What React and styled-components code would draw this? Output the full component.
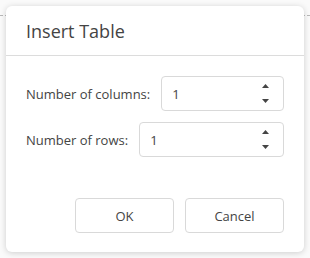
import React, { useState } from 'react'
import styled, { createGlobalStyle } from 'styled-components'

const GlobalStyle = createGlobalStyle`
  html, body {
    margin: 0;
    padding: 0;
    background: #ffffff;
    font-family: "Open Sans", "Noto Sans", sans-serif;
  }
  * { box-sizing: border-box; }
`

const Page = styled.div`
  position: relative;
  width: 310px;
  height: 258px;
  padding: 6px 6px 0 6px;
  overflow: hidden;
  background: #fafafa;
`

const Guide = styled.div`
  position: absolute;
  left: 0;
  right: 0;
  top: 15px;
  border-top: 1px dashed #b8b8b8;
`

const Dialog = styled.div`
  position: relative;
  width: 298px;
  height: 246px;
  background: #fff;
  border-radius: 6px;
  box-shadow: 0 1px 6px rgba(0, 0, 0, 0.18);
  display: flex;
  flex-direction: column;
`

const Header = styled.div`
  height: 50px;
  padding: 0 20px;
  display: flex;
  align-items: center;
  border-bottom: 1px solid #dcdcdc;
  font-size: 18px;
  color: #444;
`

const Body = styled.div`
  padding: 20px 20px 0 20px;
  display: flex;
  flex-direction: column;
  gap: 11px;
`

const Row = styled.div`
  display: flex;
  align-items: center;
  gap: 11px;
`

const Label = styled.label`
  font-size: 13px;
  color: #444;
  white-space: nowrap;
`

const Spin = styled.div`
  flex: 1;
  height: 35px;
  border: 1px solid #d9d9d9;
  border-radius: 4px;
  display: flex;
  align-items: center;
  padding: 0 10px;
  font-size: 13px;
  color: #444;
`

const Value = styled.span`
  flex: 1;
`

const Arrows = styled.div`
  display: flex;
  flex-direction: column;
  justify-content: space-between;
  height: 19px;
  margin-right: 4px;
`

const Footer = styled.div`
  margin-top: auto;
  padding: 0 20px 19px 20px;
  display: flex;
  justify-content: flex-end;
  gap: 11px;
`

const Button = styled.button`
  width: 99px;
  height: 35px;
  border: 1px solid #d9d9d9;
  border-radius: 4px;
  background: #fff;
  font-family: inherit;
  font-size: 13px;
  color: #444;
`

const Up = () => (
  <svg width="7" height="4" viewBox="0 0 7 4"><path d="M0 4 L3.5 0 L7 4 Z" fill="#444" /></svg>
)
const Down = () => (
  <svg width="7" height="4" viewBox="0 0 7 4"><path d="M0 0 L7 0 L3.5 4 Z" fill="#444" /></svg>
)

const NumberField = ({ value }) => (
  <Spin>
    <Value>{value}</Value>
    <Arrows>
      <Up />
      <Down />
    </Arrows>
  </Spin>
)

export default function App() {
  const [cols] = useState(1)
  const [rows] = useState(1)
  return (
    <>
      <GlobalStyle />
      <Page>
        <Guide />
        <Dialog>
          <Header>Insert Table</Header>
          <Body>
            <Row>
              <Label>Number of columns:</Label>
              <NumberField value={cols} />
            </Row>
            <Row>
              <Label>Number of rows:</Label>
              <NumberField value={rows} />
            </Row>
          </Body>
          <Footer>
            <Button>OK</Button>
            <Button>Cancel</Button>
          </Footer>
        </Dialog>
      </Page>
    </>
  )
}
